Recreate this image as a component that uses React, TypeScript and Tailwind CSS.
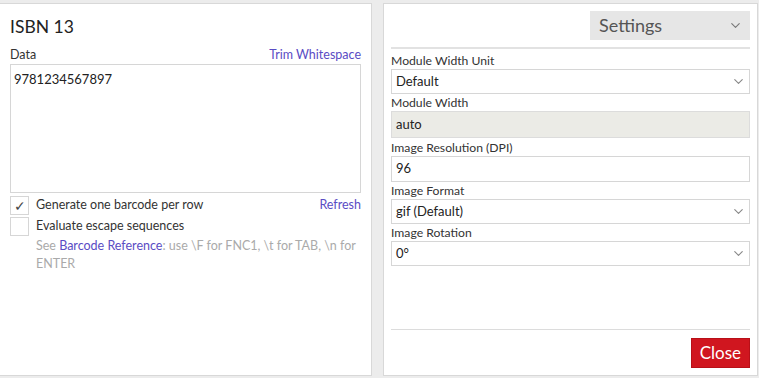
import { ChevronDown } from 'lucide-react'

const font = { fontFamily: 'Lato, "Open Sans", sans-serif' }

function Label({ children }: { children: React.ReactNode }) {
  return <div className="text-[12.2px] leading-[17px] text-[#333] h-[17px]">{children}</div>
}

function SelectBox({ value }: { value: string }) {
  return (
    <div className="h-[25px] border border-[#d6d6d6] bg-white flex items-center justify-between pl-[4px] pr-[3px] text-[13px] text-[#222]">
      <span>{value}</span>
      <ChevronDown className="w-[15px] h-[15px] text-[#888]" strokeWidth={1.8} />
    </div>
  )
}

export default function App() {
  return (
    <div className="w-[759px] h-[378px] bg-[#ececec] pt-[3px] flex gap-[11px]" style={font}>
      {/* left panel */}
      <div className="w-[372px] h-[373px] bg-white border border-l-0 border-[#d8d8d8] px-[10px] flex flex-col">
        <h1 className="text-[17.5px] leading-[22px] text-[#222] mt-[12px]">ISBN 13</h1>
        <div className="flex justify-between items-end mt-[9px] text-[12.5px] leading-[16px]">
          <span className="text-[#333]">Data</span>
          <span className="text-[#5a4cc4]">Trim Whitespace</span>
        </div>
        <div className="mt-[1px] h-[129px] border border-[#d6d6d6] px-[3px] py-[6px] text-[13px] leading-[16px] text-[#222]">
          9781234567897
        </div>
        <div className="flex items-center mt-[3px] h-[19px]">
          <div className="w-[19px] h-[19px] border border-[#d6d6d6] flex items-center justify-center text-[14px] text-[#444]">✓</div>
          <span className="ml-[7px] text-[12.5px] text-[#333] flex-1">Generate one barcode per row</span>
          <span className="text-[12.5px] text-[#5a4cc4]">Refresh</span>
        </div>
        <div className="flex items-center mt-[2px] h-[19px]">
          <div className="w-[19px] h-[19px] border border-[#d6d6d6]" />
          <span className="ml-[7px] text-[12.5px] text-[#333]">Evaluate escape sequences</span>
        </div>
        <p className="ml-[26px] mt-[1px] text-[12.5px] leading-[18px] text-[#aaa]">
          See <span className="text-[#5a4cc4]">Barcode Reference</span>: use \F for FNC1, \t for TAB, \n for ENTER
        </p>
      </div>

      {/* right panel */}
      <div className="w-[375px] h-[373px] bg-white border border-[#d8d8d8] px-[7px] flex flex-col">
        <div className="flex justify-end mt-[7px]">
          <div className="w-[160px] h-[29px] bg-[#e6e6e6] flex items-center justify-between pl-[9px] pr-[7px]">
            <span className="text-[18px] text-[#555]">Settings</span>
            <ChevronDown className="w-[15px] h-[15px] text-[#777]" strokeWidth={1.8} />
          </div>
        </div>
        <div className="h-[2px] bg-[#e2e2e2] mt-[7px]" />
        <div className="mt-[3px]">
          <Label>Module Width Unit</Label>
          <SelectBox value="Default" />
        </div>
        <div>
          <Label>Module Width</Label>
          <div className="h-[27px] bg-[#ebebe6] border border-[#dcdcdc] flex items-center pl-[4px] text-[13px] text-[#222]">auto</div>
        </div>
        <div className="mt-[1px]">
          <Label>Image Resolution (DPI)</Label>
          <div className="h-[26px] border border-[#d6d6d6] flex items-center pl-[4px] text-[13px] text-[#222]">96</div>
        </div>
        <div>
          <Label>Image Format</Label>
          <SelectBox value="gif (Default)" />
        </div>
        <div>
          <Label>Image Rotation</Label>
          <SelectBox value="0°" />
        </div>
        <div className="flex-1" />
        <div className="h-[1px] bg-[#dcdcdc]" />
        <div className="flex justify-end mt-[8px] mb-[7px]">
          <button className="h-[30px] px-[8px] bg-[#d0161f] border border-[#b81018] text-white text-[17px]">Close</button>
        </div>
      </div>
    </div>
  )
}
